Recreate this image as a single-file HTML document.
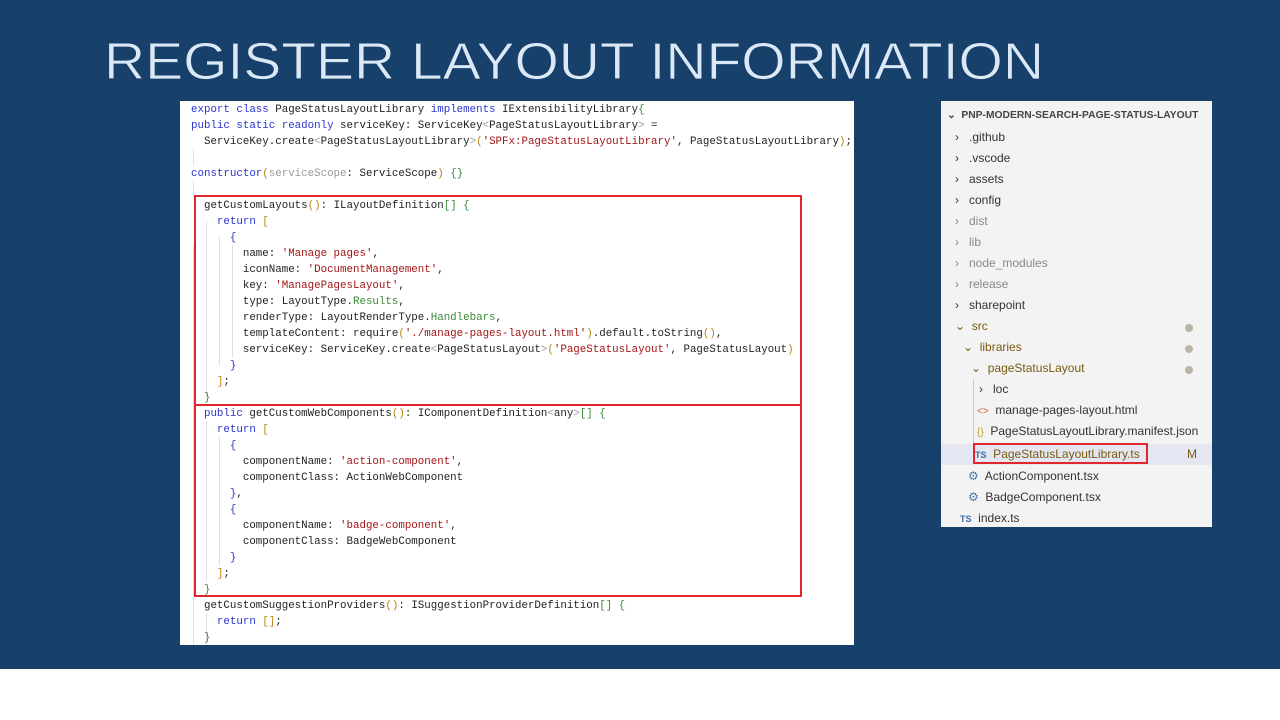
<!DOCTYPE html>
<html><head><meta charset="utf-8"><style>
body{margin:0;width:1280px;height:720px;background:#fff;position:relative;overflow:hidden;font-family:"Liberation Sans",sans-serif}
#bg{position:absolute;left:0;top:0;width:1280px;height:669px;background:#17406b}
#code{position:absolute;left:180px;top:101px;width:674px;height:544px;background:#fff;overflow:hidden}
.l{position:absolute;left:11px;height:16px;line-height:16px;font-family:"Liberation Mono",monospace;font-size:10.8px;color:#1f1f1f;white-space:pre;margin-top:1px}
.k{color:#2b35c8}.s{color:#a31515}.t{color:#267f99}.g{color:#3a8a3a}.p{color:#999}.y{color:#b8860b}
.box{position:absolute;border:2px solid #e0262c;box-sizing:border-box}
.guide{position:absolute;width:1px;background:#ddd}
#ex{position:absolute;left:941px;top:101px;width:271px;height:426px;background:#f3f3f3;font-size:12px;color:#333;overflow:hidden}
.r{position:absolute;height:21px;line-height:21px;white-space:nowrap;margin-top:2px}
.gr{color:#888}
.dot{position:absolute;right:19px;width:8px;height:8px;border-radius:50%;background:#bbb5a8;margin-top:2px}
</style></head><body>
<div id="bg"></div>
<svg style="position:absolute;left:0;top:0" width="1280" height="100"><text x="104" y="79" textLength="940" lengthAdjust="spacingAndGlyphs" font-family="Liberation Sans" font-size="52" fill="#dbe9f6" stroke="#17406b" stroke-width="0.8">REGISTER LAYOUT INFORMATION</text></svg>
<div id="code">
<div class="guide" style="left:13px;top:48px;height:16px"></div>
<div class="guide" style="left:13px;top:80px;height:16px"></div>
<div class="guide" style="left:13px;top:144px;height:400px"></div>
<div class="guide" style="left:26px;top:120px;height:176px"></div>
<div class="guide" style="left:39px;top:136px;height:128px"></div>
<div class="guide" style="left:52px;top:144px;height:112px"></div>
<div class="guide" style="left:26px;top:320px;height:160px"></div>
<div class="guide" style="left:39px;top:336px;height:128px"></div>
<div class="guide" style="left:26px;top:512px;height:32px"></div>
<div class="l" style="top:0"><span class="k">export class</span> PageStatusLayoutLibrary <span class="k">implements</span> IExtensibilityLibrary<span class="g">{</span></div>
<div class="l" style="top:16px"><span class="k">public static readonly</span> serviceKey: ServiceKey<span class="p">&lt;</span>PageStatusLayoutLibrary<span class="p">&gt;</span> =</div>
<div class="l" style="top:32px">  ServiceKey.create<span class="p">&lt;</span>PageStatusLayoutLibrary<span class="p">&gt;</span><span class="y">(</span><span class="s">'SPFx:PageStatusLayoutLibrary'</span>, PageStatusLayoutLibrary<span class="y">)</span>;</div>
<div class="l" style="top:64px"><span class="k">constructor</span><span class="y">(</span><span class="p">serviceScope</span>: ServiceScope<span class="y">)</span> <span class="g">{}</span></div>
<div class="l" style="top:96px">  getCustomLayouts<span class="y">()</span>: ILayoutDefinition<span class="g">[]</span> <span class="g">{</span></div>
<div class="l" style="top:112px">    <span class="k">return</span> <span class="y">[</span></div>
<div class="l" style="top:128px">      <span class="k">{</span></div>
<div class="l" style="top:144px">        name: <span class="s">'Manage pages'</span>,</div>
<div class="l" style="top:160px">        iconName: <span class="s">'DocumentManagement'</span>,</div>
<div class="l" style="top:176px">        key: <span class="s">'ManagePagesLayout'</span>,</div>
<div class="l" style="top:192px">        type: LayoutType.<span class="g">Results</span>,</div>
<div class="l" style="top:208px">        renderType: LayoutRenderType.<span class="g">Handlebars</span>,</div>
<div class="l" style="top:224px">        templateContent: require<span class="y">(</span><span class="s">'./manage-pages-layout.html'</span><span class="y">)</span>.default.toString<span class="y">()</span>,</div>
<div class="l" style="top:240px">        serviceKey: ServiceKey.create<span class="p">&lt;</span>PageStatusLayout<span class="p">&gt;</span><span class="y">(</span><span class="s">'PageStatusLayout'</span>, PageStatusLayout<span class="y">)</span></div>
<div class="l" style="top:256px">      <span class="k">}</span></div>
<div class="l" style="top:272px">    <span class="y">]</span>;</div>
<div class="l" style="top:288px">  <span class="g">}</span></div>
<div class="l" style="top:304px">  <span class="k">public</span> getCustomWebComponents<span class="y">()</span>: IComponentDefinition<span class="p">&lt;</span>any<span class="p">&gt;</span><span class="g">[]</span> <span class="g">{</span></div>
<div class="l" style="top:320px">    <span class="k">return</span> <span class="y">[</span></div>
<div class="l" style="top:336px">      <span class="k">{</span></div>
<div class="l" style="top:352px">        componentName: <span class="s">'action-component'</span>,</div>
<div class="l" style="top:368px">        componentClass: ActionWebComponent</div>
<div class="l" style="top:384px">      <span class="k">}</span>,</div>
<div class="l" style="top:400px">      <span class="k">{</span></div>
<div class="l" style="top:416px">        componentName: <span class="s">'badge-component'</span>,</div>
<div class="l" style="top:432px">        componentClass: BadgeWebComponent</div>
<div class="l" style="top:448px">      <span class="k">}</span></div>
<div class="l" style="top:464px">    <span class="y">]</span>;</div>
<div class="l" style="top:480px">  <span class="g">}</span></div>
<div class="l" style="top:496px">  getCustomSuggestionProviders<span class="y">()</span>: ISuggestionProviderDefinition<span class="g">[]</span> <span class="g">{</span></div>
<div class="l" style="top:512px">    <span class="k">return</span> <span class="y">[]</span>;</div>
<div class="l" style="top:528px">  <span class="g">}</span></div>
<div class="box" style="left:14px;top:94px;width:608px;height:211px"></div>
<div class="box" style="left:14px;top:303px;width:608px;height:193px"></div>
</div>
<div id="ex">
<div class="r" style="top:2px;left:6px;font-weight:bold;font-size:10.3px;color:#444">⌄&nbsp; PNP-MODERN-SEARCH-PAGE-STATUS-LAYOUT</div>
<div class="r" style="top:24px;left:14px">›&nbsp;&nbsp; .github</div>
<div class="r" style="top:45px;left:14px">›&nbsp;&nbsp; .vscode</div>
<div class="r" style="top:66px;left:14px">›&nbsp;&nbsp; assets</div>
<div class="r" style="top:87px;left:14px">›&nbsp;&nbsp; config</div>
<div class="r gr" style="top:108px;left:14px">›&nbsp;&nbsp; dist</div>
<div class="r gr" style="top:129px;left:14px">›&nbsp;&nbsp; lib</div>
<div class="r gr" style="top:150px;left:14px">›&nbsp;&nbsp; node_modules</div>
<div class="r gr" style="top:171px;left:14px">›&nbsp;&nbsp; release</div>
<div class="r" style="top:192px;left:14px">›&nbsp;&nbsp; sharepoint</div>
<div class="r" style="top:213px;left:14px;color:#7a5a12">⌄&nbsp;&nbsp;src</div><div class="dot" style="top:221px"></div>
<div class="r" style="top:234px;left:22px;color:#7a5a12">⌄&nbsp;&nbsp;libraries</div><div class="dot" style="top:242px"></div>
<div class="r" style="top:255px;left:30px;color:#7a5a12">⌄&nbsp;&nbsp;pageStatusLayout</div><div class="dot" style="top:263px"></div>
<div style="position:absolute;left:32px;top:278px;width:1px;height:84px;background:#ccc"></div>
<div class="r" style="top:276px;left:38px">›&nbsp;&nbsp; loc</div>
<div class="r" style="top:297px;left:36px"><span style="color:#c86a2a;font-size:10px">&lt;&gt;</span>&nbsp; manage-pages-layout.html</div>
<div class="r" style="top:318px;left:36px"><span style="color:#b8a020;font-size:10px">{}</span>&nbsp; PageStatusLayoutLibrary.manifest.json</div>
<div class="r" style="top:341px;left:0;width:271px;height:21px;background:#e4e6f1"></div>
<div class="r" style="top:341px;left:34px;color:#7a5a12"><span style="color:#3a6ea5;font-size:9px;font-weight:bold">TS</span>&nbsp; PageStatusLayoutLibrary.ts</div>
<div class="r" style="top:341px;left:246px;color:#7a5a12">M</div>
<div class="box" style="left:32px;top:342px;width:175px;height:21px"></div>
<div class="r" style="top:363px;left:27px"><span style="color:#4a7ab0">⚙</span>&nbsp; ActionComponent.tsx</div>
<div class="r" style="top:384px;left:27px"><span style="color:#4a7ab0">⚙</span>&nbsp; BadgeComponent.tsx</div>
<div class="r" style="top:405px;left:19px"><span style="color:#3a6ea5;font-size:9px;font-weight:bold">TS</span>&nbsp; index.ts</div>
</div>
</body></html>
